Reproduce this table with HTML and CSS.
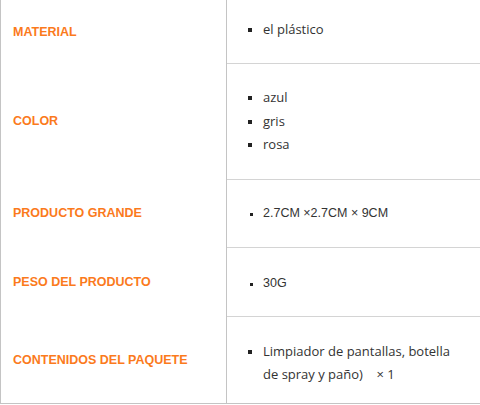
FILE: index.html
```html
<!DOCTYPE html>
<html>
<head>
<meta charset="utf-8">
<link rel="stylesheet" href="styles.css">
</head>
<body>
<div class="spec">
  <div class="label r1">MATERIAL</div>
  <div class="value r1 first"><ul><li>el plástico</li></ul></div>

  <div class="label r2">COLOR</div>
  <div class="value r2"><ul><li>azul</li><li>gris</li><li>rosa</li></ul></div>

  <div class="label r3">PRODUCTO GRANDE</div>
  <div class="value r3"><ul class="arial"><li>2.7CM ×2.7CM × 9CM</li></ul></div>

  <div class="label r4">PESO DEL PRODUCTO</div>
  <div class="value r4"><ul class="arial"><li>30G</li></ul></div>

  <div class="label r5">CONTENIDOS DEL PAQUETE</div>
  <div class="value r5"><ul><li>Limpiador de pantallas, botella de spray y paño)&nbsp;&nbsp;&nbsp; × 1</li></ul></div>
</div>
</body>
</html>
```
FILE: styles.css
```css
html, body {
  margin: 0;
  padding: 0;
  background: #fff;
}
.spec {
  width: 480px;
  display: grid;
  grid-template-columns: 226px 1fr;
  grid-template-rows: 63px 116px 68px 69px 87px;
  border-left: 1px solid #c4c4c4;
  border-bottom: 1px solid #c4c4c4;
  box-sizing: border-box;
}
.label {
  border-right: 1px solid #c4c4c4;
  display: flex;
  align-items: center;
  padding-left: 12px;
  font-family: "Liberation Sans", Arial, sans-serif;
  font-weight: bold;
  font-size: 12.5px;
  color: #fb7a1c;
}
.value {
  border-top: 1px solid #d4d4d4;
  display: flex;
  align-items: center;
  padding-right: 26px;
  font-family: "Open Sans", sans-serif;
  font-size: 13px;
  color: #333;
}
.value.first {
  border-top: none;
  padding-bottom: 4px;
}
.value.r4 {
  padding-top: 3px;
}
.value.r5 {
  padding-top: 6px;
}
.value ul {
  margin: 0;
  padding: 0 0 0 36px;
  list-style: square;
  line-height: 23.5px;
}
.value ul.arial {
  font-family: "Liberation Sans", Arial, sans-serif;
  font-size: 12.5px;
}
.value li::marker {
  font-size: 11px;
  color: #222;
}
```
